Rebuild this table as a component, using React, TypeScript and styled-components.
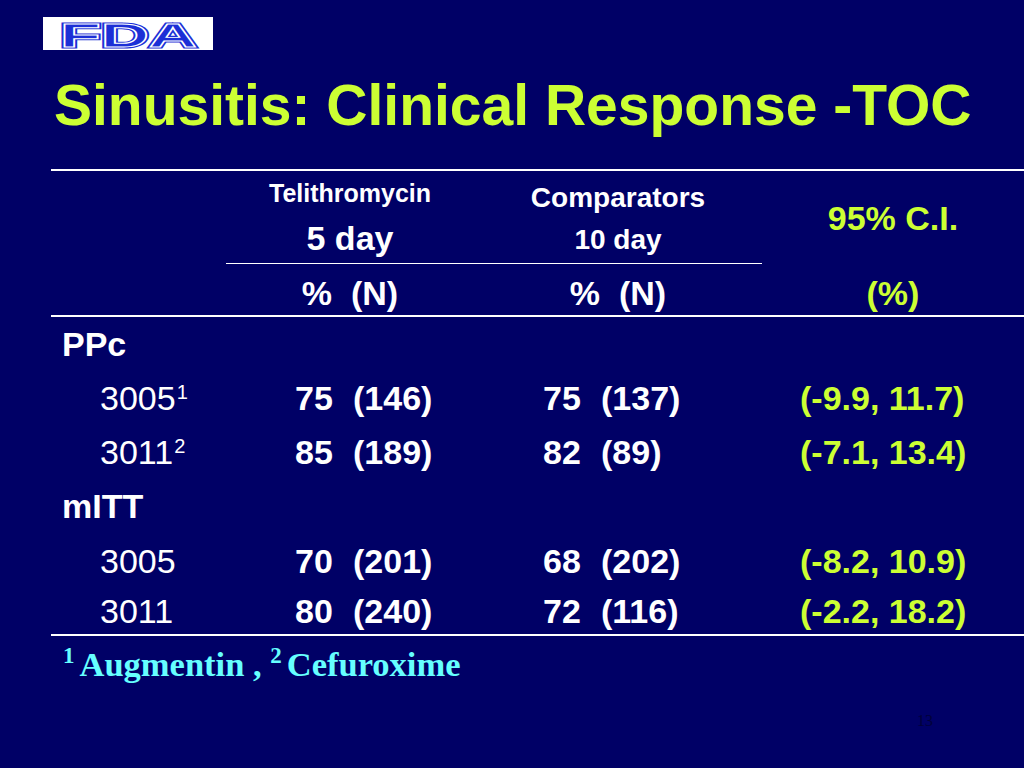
import React from 'react';
import styled, { createGlobalStyle } from 'styled-components';

const Global = createGlobalStyle`
  html, body {
    margin: 0;
    padding: 0;
    background: #000066;
  }
`;

const Slide = styled.div`
  width: 1024px;
  height: 768px;
  background: #000066;
  font-family: "Liberation Sans", Arial, sans-serif;
  color: #ffffff;
  display: flex;
  flex-direction: column;
  overflow: hidden;
`;

const LogoBox = styled.div`
  margin: 17px 0 0 43px;
  width: 170px;
  height: 33px;
  background: #ffffff;
`;

const Title = styled.h1`
  margin: 22px 0 0 54px;
  font-size: 57px;
  line-height: 66px;
  font-weight: 700;
  color: #ccff33;
`;

const Table = styled.div`
  margin: 31px 0 0 51px;
  width: 973px;
  border-top: 2px solid #ffffff;
  font-size: 34px;
`;

const Grid = styled.div<{ $h: number; $rule?: boolean }>`
  display: grid;
  grid-template-columns: 175px 248px 288px 262px;
  height: ${(p) => p.$h}px;
  border-bottom: ${(p) => (p.$rule ? '2px solid #ffffff' : 'none')};
  box-sizing: border-box;
`;

const HeadGrid = styled(Grid)`
  grid-template-rows: 93px 1fr;
`;

const GroupCell = styled.div<{ $line?: boolean; $pad: number }>`
  display: flex;
  flex-direction: column;
  align-items: center;
  padding-top: ${(p) => p.$pad}px;
  border-bottom: ${(p) => (p.$line ? '1px solid #ffffff' : 'none')};
`;

const HeadText = styled.span<{ $size: number; $lh: number; $gap?: number; $green?: boolean }>`
  font-size: ${(p) => p.$size}px;
  line-height: ${(p) => p.$lh}px;
  margin-top: ${(p) => p.$gap ?? 0}px;
  color: ${(p) => (p.$green ? '#ccff33' : '#ffffff')};
  font-weight: 700;
  white-space: pre;
`;

const UnitCell = styled.div<{ $green?: boolean }>`
  display: flex;
  align-items: center;
  justify-content: center;
  padding-top: 8px;
  font-size: 34px;
  font-weight: 700;
  color: ${(p) => (p.$green ? '#ccff33' : '#ffffff')};
  white-space: pre;
`;

const CICell = styled.div`
  grid-column: 4;
  grid-row: 1;
  display: flex;
  align-items: flex-start;
  justify-content: center;
  padding-top: 28px;
`;

const Section = styled.div`
  display: flex;
  align-items: center;
  padding-left: 11px;
  font-weight: 700;
`;

const Label = styled.div`
  display: flex;
  align-items: center;
  padding-left: 49px;
  font-weight: 400;
`;

const Sup = styled.span`
  font-size: 20px;
  line-height: 1;
  align-self: center;
  margin: -14px 0 0 1px;
`;

const Value = styled.div`
  display: flex;
  align-items: center;
  padding-left: 69px;
  font-weight: 700;
`;

const Num = styled.span`
  width: 58px;
`;

const CI = styled.div`
  display: flex;
  align-items: center;
  padding-left: 38px;
  font-weight: 700;
  color: #ccff33;
  white-space: nowrap;
`;

const Footnote = styled.div`
  margin: 8px 0 0 63px;
  font-family: "Liberation Serif", "Times New Roman", serif;
  font-weight: 700;
  font-size: 34.5px;
  line-height: 40px;
  color: #66ffff;
`;

const FootSup = styled.sup`
  font-size: 23px;
  line-height: 0;
  vertical-align: 13px;
  margin-right: 5px;
`;

const PageNum = styled.div`
  margin: 28px 0 0 917px;
  font-family: "Liberation Serif", "Times New Roman", serif;
  font-size: 16px;
  line-height: 18px;
  color: #00003a;
`;

const FdaLogo = () => (
  <svg width="170" height="33" viewBox="0 0 170 33">
    <g
      fontFamily="Liberation Sans, Arial, sans-serif"
      fontWeight="900"
      fontSize="33"
    >
      <text
        x="17"
        y="30"
        textLength="137"
        lengthAdjust="spacingAndGlyphs"
        fill="#1c2fd6"
        stroke="#1c2fd6"
        strokeWidth="3"
      >
        FDA
      </text>
      <text
        x="17"
        y="30"
        textLength="137"
        lengthAdjust="spacingAndGlyphs"
        fill="none"
        stroke="#ffffff"
        strokeWidth="0.9"
      >
        FDA
      </text>
    </g>
  </svg>
);

type Row = { label: string; sup?: string; a: [string, string]; b: [string, string]; ci: string; h: number };

const ppc: Row[] = [
  { label: '3005', sup: '1', a: ['75', '(146)'], b: ['75', '(137)'], ci: '(-9.9, 11.7)', h: 55 },
  { label: '3011', sup: '2', a: ['85', '(189)'], b: ['82', '(89)'], ci: '(-7.1, 13.4)', h: 53 },
];

const mitt: Row[] = [
  { label: '3005', a: ['70', '(201)'], b: ['68', '(202)'], ci: '(-8.2, 10.9)', h: 54 },
  { label: '3011', a: ['80', '(240)'], b: ['72', '(116)'], ci: '(-2.2, 18.2)', h: 48 },
];

const DataRow = ({ r, last }: { r: Row; last?: boolean }) => (
  <Grid $h={r.h} $rule={last}>
    <Label>
      {r.label}
      {r.sup && <Sup>{r.sup}</Sup>}
    </Label>
    <Value>
      <Num>{r.a[0]}</Num>
      <span>{r.a[1]}</span>
    </Value>
    <Value>
      <Num>{r.b[0]}</Num>
      <span>{r.b[1]}</span>
    </Value>
    <CI>{r.ci}</CI>
  </Grid>
);

export default function App() {
  return (
    <Slide>
      <Global />
      <LogoBox>
        <FdaLogo />
      </LogoBox>
      <Title>Sinusitis: Clinical Response -TOC</Title>
      <Table>
        <HeadGrid $h={146} $rule>
          <div />
          <GroupCell $line $pad={7}>
            <HeadText $size={25} $lh={30}>Telithromycin</HeadText>
            <HeadText $size={34} $lh={40} $gap={10}>5 day</HeadText>
          </GroupCell>
          <GroupCell $line $pad={10}>
            <HeadText $size={28} $lh={34}>Comparators</HeadText>
            <HeadText $size={28} $lh={44} $gap={3}>10 day</HeadText>
          </GroupCell>
          <CICell>
            <HeadText $size={34} $lh={38} $green>95% C.I.</HeadText>
          </CICell>
          <div />
          <UnitCell>{'%  (N)'}</UnitCell>
          <UnitCell>{'%  (N)'}</UnitCell>
          <UnitCell $green>(%)</UnitCell>
        </HeadGrid>
        <Grid $h={54}>
          <Section>PPc</Section>
        </Grid>
        {ppc.map((r) => (
          <DataRow key={r.label} r={r} />
        ))}
        <Grid $h={55}>
          <Section>mITT</Section>
        </Grid>
        {mitt.map((r, i) => (
          <DataRow key={r.label} r={r} last={i === mitt.length - 1} />
        ))}
      </Table>
      <Footnote>
        <FootSup>1</FootSup>Augmentin , <FootSup>2</FootSup>Cefuroxime
      </Footnote>
      <PageNum>13</PageNum>
    </Slide>
  );
}
